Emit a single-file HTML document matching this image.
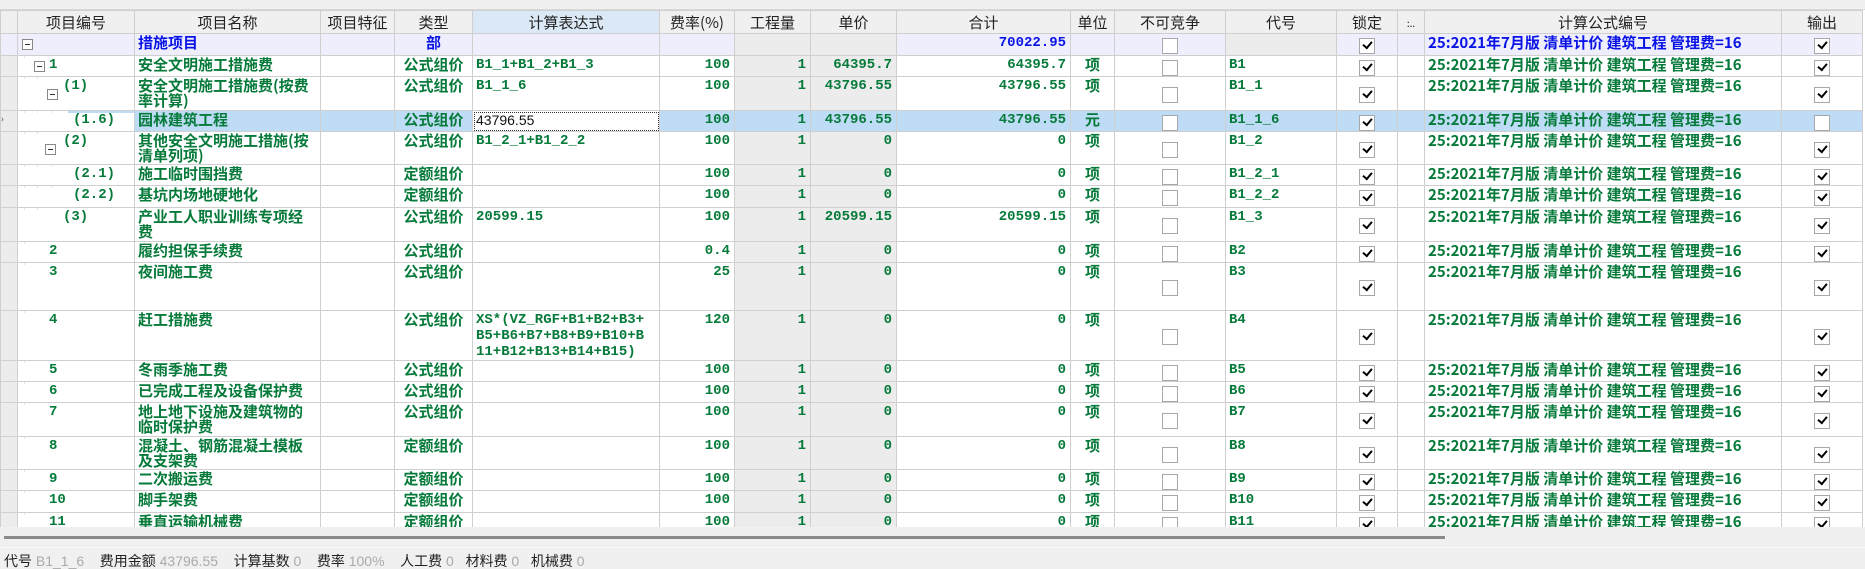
<!DOCTYPE html>
<html><head><meta charset="utf-8"><style>
*{margin:0;padding:0;box-sizing:border-box}
body{width:1865px;height:555px;overflow:hidden;background:#f0f0f0;font-family:"Liberation Sans","Noto Sans CJK SC",sans-serif;position:relative}
#tb{position:absolute;left:0;top:0;width:1865px;height:10px;background:#f0f0f0;border-bottom:1px solid #d8d8d8}
#wrap{position:absolute;left:0;top:10px;width:1865px;height:517px;overflow:hidden;background:#fff}
table{border-collapse:collapse;table-layout:fixed;width:1862px}
td,th{border:1px solid #cfcfcf;overflow:hidden;white-space:nowrap;vertical-align:top;padding:1px 3px 0 3px;font-size:15px;line-height:16px;color:#067a3a;font-weight:bold;font-family:"Noto Sans CJK SC","WenQuanYi Zen Hei",sans-serif}
th{background:#f0f0f0;color:#222;font-weight:normal;text-align:center;vertical-align:middle;font-size:15px}
th.sel{background:#dbe9f6}
td.rh{background:#ececec;border-color:#d0d0d0;padding:0}
td.g{background:#ececec}
.n{font-family:"Liberation Mono",monospace;font-size:14px;text-align:right;padding-right:4px}
.c{text-align:center}
.m{font-family:"Liberation Mono",monospace;font-size:14px;line-height:16px}
.nm{white-space:normal;line-height:15px;word-break:break-all}
tr.blue td{background:#eeeefc;color:#0a14e6}
tr.blue td.g{background:#ececec}
tr.sel td{background:#bedcf5}
tr.sel td.rh{background:#ececec}
tr.sel td.ex{background:#fff;outline:1px dotted #333;outline-offset:-2px;color:#111;font-weight:normal;font-family:"Liberation Sans",sans-serif;font-size:14px}
.cb{display:block;margin:2px auto 0;width:16px;height:16px;border:1px solid #a8a8a8;background:#fff;position:relative}
.ck::after{content:"";position:absolute;left:3px;top:2px;width:7px;height:4px;border-left:2.5px solid #000;border-bottom:2.5px solid #000;transform:rotate(-50deg)}
.mid{vertical-align:middle}
.tree{position:relative;height:100%}
.box{position:absolute;width:11px;height:11px;border:1px solid #888;background:#fff}
.box::after{content:"";position:absolute;left:2px;top:4px;width:5px;height:1px;background:#333}
.tx{position:absolute;top:0;font-family:"Liberation Mono",monospace;font-size:14px}
.hl{position:absolute;top:-1px;bottom:-1px;right:-4px;background:#bedcf5}
.vl{position:absolute;top:-1px;bottom:-1px;width:1px;background:#e4e4e4}
</style></head><body>
<div id="tb"></div>
<div id="wrap">
<table>
<colgroup>
<col style="width:17px"><col style="width:117px"><col style="width:186px"><col style="width:74px"><col style="width:78px"><col style="width:187px"><col style="width:75px"><col style="width:76px"><col style="width:86px"><col style="width:174px"><col style="width:44px"><col style="width:111px"><col style="width:111px"><col style="width:61px"><col style="width:27px"><col style="width:357px"><col style="width:81px">
</colgroup>
<tr style="height:23px"><th></th><th>项目编号</th><th>项目名称</th><th>项目特征</th><th>类型</th><th class="sel">计算表达式</th><th>费率(%)</th><th>工程量</th><th>单价</th><th>合计</th><th>单位</th><th>不可竞争</th><th>代号</th><th>锁定</th><th style="font-size:10px">:..</th><th>计算公式编号</th><th>输出</th></tr>

<tr class="blue" style="height:22px"><td class="rh"></td><td><div class="tree"><span class="box" style="left:1px;top:4px"></span></div></td><td>措施项目</td><td></td><td class="c">部</td><td></td><td></td><td class="g"></td><td class="g"></td><td class="n">70022.95</td><td></td><td class="mid"><span class="cb"></span></td><td class="g"></td><td class="mid"><span class="cb ck"></span></td><td></td><td>25:2021年7月版 清单计价 建筑工程 管理费=16</td><td class="mid"><span class="cb ck"></span></td></tr>

<tr style="height:21px"><td class="rh"></td><td><div class="tree"><span class="vl" style="left:3px"></span><span class="box" style="left:13px;top:4px"></span><span class="tx" style="left:28px">1</span></div></td><td>安全文明施工措施费</td><td></td><td class="c">公式组价</td><td class="m">B1_1+B1_2+B1_3</td><td class="n">100</td><td class="g n">1</td><td class="g n">64395.7</td><td class="n">64395.7</td><td class="c">项</td><td class="mid"><span class="cb"></span></td><td class="m">B1</td><td class="mid"><span class="cb ck"></span></td><td></td><td>25:2021年7月版 清单计价 建筑工程 管理费=16</td><td class="mid"><span class="cb ck"></span></td></tr>

<tr style="height:34px"><td class="rh"></td><td><div class="tree"><span class="vl" style="left:3px"></span><span class="vl" style="left:16px"></span><span class="box" style="left:26px;top:11px"></span><span class="tx" style="left:42px">(1)</span></div></td><td class="nm">安全文明施工措施费(按费率计算)</td><td></td><td class="c">公式组价</td><td class="m">B1_1_6</td><td class="n">100</td><td class="g n">1</td><td class="g n">43796.55</td><td class="n">43796.55</td><td class="c">项</td><td class="mid"><span class="cb"></span></td><td class="m">B1_1</td><td class="mid"><span class="cb ck"></span></td><td></td><td>25:2021年7月版 清单计价 建筑工程 管理费=16</td><td class="mid"><span class="cb ck"></span></td></tr>

<tr class="sel" style="height:21px"><td class="rh" style="font-size:9px;color:#444;font-weight:normal">›</td><td style="background:#fff"><div class="tree"><span class="vl" style="left:3px"></span><span class="vl" style="left:16px"></span><span class="vl" style="left:30px"></span><span class="hl" style="left:47px"></span><span class="tx" style="left:52px">(1.6)</span></div></td><td>园林建筑工程</td><td></td><td class="c">公式组价</td><td class="ex">43796.55</td><td class="n">100</td><td class="n">1</td><td class="n">43796.55</td><td class="n">43796.55</td><td class="c">元</td><td class="mid"><span class="cb"></span></td><td class="m">B1_1_6</td><td class="mid"><span class="cb ck"></span></td><td></td><td>25:2021年7月版 清单计价 建筑工程 管理费=16</td><td class="mid"><span class="cb"></span></td></tr>

<tr style="height:33px"><td class="rh"></td><td><div class="tree"><span class="vl" style="left:3px"></span><span class="vl" style="left:16px"></span><span class="box" style="left:24px;top:11px"></span><span class="tx" style="left:42px">(2)</span></div></td><td class="nm">其他安全文明施工措施(按清单列项)</td><td></td><td class="c">公式组价</td><td class="m">B1_2_1+B1_2_2</td><td class="n">100</td><td class="g n">1</td><td class="g n">0</td><td class="n">0</td><td class="c">项</td><td class="mid"><span class="cb"></span></td><td class="m">B1_2</td><td class="mid"><span class="cb ck"></span></td><td></td><td>25:2021年7月版 清单计价 建筑工程 管理费=16</td><td class="mid"><span class="cb ck"></span></td></tr>

<tr style="height:21px"><td class="rh"></td><td><div class="tree"><span class="vl" style="left:3px"></span><span class="vl" style="left:16px"></span><span class="vl" style="left:30px"></span><span class="tx" style="left:52px">(2.1)</span></div></td><td>施工临时围挡费</td><td></td><td class="c">定额组价</td><td></td><td class="n">100</td><td class="g n">1</td><td class="g n">0</td><td class="n">0</td><td class="c">项</td><td class="mid"><span class="cb"></span></td><td class="m">B1_2_1</td><td class="mid"><span class="cb ck"></span></td><td></td><td>25:2021年7月版 清单计价 建筑工程 管理费=16</td><td class="mid"><span class="cb ck"></span></td></tr>

<tr style="height:22px"><td class="rh"></td><td><div class="tree"><span class="vl" style="left:3px"></span><span class="vl" style="left:16px"></span><span class="vl" style="left:30px"></span><span class="tx" style="left:52px">(2.2)</span></div></td><td>基坑内场地硬地化</td><td></td><td class="c">定额组价</td><td></td><td class="n">100</td><td class="g n">1</td><td class="g n">0</td><td class="n">0</td><td class="c">项</td><td class="mid"><span class="cb"></span></td><td class="m">B1_2_2</td><td class="mid"><span class="cb ck"></span></td><td></td><td>25:2021年7月版 清单计价 建筑工程 管理费=16</td><td class="mid"><span class="cb ck"></span></td></tr>

<tr style="height:34px"><td class="rh"></td><td><div class="tree"><span class="vl" style="left:3px"></span><span class="vl" style="left:16px"></span><span class="tx" style="left:42px">(3)</span></div></td><td class="nm">产业工人职业训练专项经费</td><td></td><td class="c">公式组价</td><td class="m">20599.15</td><td class="n">100</td><td class="g n">1</td><td class="g n">20599.15</td><td class="n">20599.15</td><td class="c">项</td><td class="mid"><span class="cb"></span></td><td class="m">B1_3</td><td class="mid"><span class="cb ck"></span></td><td></td><td>25:2021年7月版 清单计价 建筑工程 管理费=16</td><td class="mid"><span class="cb ck"></span></td></tr>

<tr style="height:21px"><td class="rh"></td><td><div class="tree"><span class="vl" style="left:3px"></span><span class="tx" style="left:28px">2</span></div></td><td>履约担保手续费</td><td></td><td class="c">公式组价</td><td></td><td class="n">0.4</td><td class="g n">1</td><td class="g n">0</td><td class="n">0</td><td class="c">项</td><td class="mid"><span class="cb"></span></td><td class="m">B2</td><td class="mid"><span class="cb ck"></span></td><td></td><td>25:2021年7月版 清单计价 建筑工程 管理费=16</td><td class="mid"><span class="cb ck"></span></td></tr>

<tr style="height:48px"><td class="rh"></td><td><div class="tree"><span class="vl" style="left:3px"></span><span class="tx" style="left:28px">3</span></div></td><td>夜间施工费</td><td></td><td class="c">公式组价</td><td></td><td class="n">25</td><td class="g n">1</td><td class="g n">0</td><td class="n">0</td><td class="c">项</td><td class="mid"><span class="cb"></span></td><td class="m">B3</td><td class="mid"><span class="cb ck"></span></td><td></td><td>25:2021年7月版 清单计价 建筑工程 管理费=16</td><td class="mid"><span class="cb ck"></span></td></tr>

<tr style="height:50px"><td class="rh"></td><td><div class="tree"><span class="vl" style="left:3px"></span><span class="tx" style="left:28px">4</span></div></td><td>赶工措施费</td><td></td><td class="c">公式组价</td><td class="m">XS*(VZ_RGF+B1+B2+B3+<br>B5+B6+B7+B8+B9+B10+B<br>11+B12+B13+B14+B15)</td><td class="n">120</td><td class="g n">1</td><td class="g n">0</td><td class="n">0</td><td class="c">项</td><td class="mid"><span class="cb"></span></td><td class="m">B4</td><td class="mid"><span class="cb ck"></span></td><td></td><td>25:2021年7月版 清单计价 建筑工程 管理费=16</td><td class="mid"><span class="cb ck"></span></td></tr>

<tr style="height:21px"><td class="rh"></td><td><div class="tree"><span class="vl" style="left:3px"></span><span class="tx" style="left:28px">5</span></div></td><td>冬雨季施工费</td><td></td><td class="c">公式组价</td><td></td><td class="n">100</td><td class="g n">1</td><td class="g n">0</td><td class="n">0</td><td class="c">项</td><td class="mid"><span class="cb"></span></td><td class="m">B5</td><td class="mid"><span class="cb ck"></span></td><td></td><td>25:2021年7月版 清单计价 建筑工程 管理费=16</td><td class="mid"><span class="cb ck"></span></td></tr>

<tr style="height:21px"><td class="rh"></td><td><div class="tree"><span class="vl" style="left:3px"></span><span class="tx" style="left:28px">6</span></div></td><td>已完成工程及设备保护费</td><td></td><td class="c">公式组价</td><td></td><td class="n">100</td><td class="g n">1</td><td class="g n">0</td><td class="n">0</td><td class="c">项</td><td class="mid"><span class="cb"></span></td><td class="m">B6</td><td class="mid"><span class="cb ck"></span></td><td></td><td>25:2021年7月版 清单计价 建筑工程 管理费=16</td><td class="mid"><span class="cb ck"></span></td></tr>

<tr style="height:34px"><td class="rh"></td><td><div class="tree"><span class="vl" style="left:3px"></span><span class="tx" style="left:28px">7</span></div></td><td class="nm">地上地下设施及建筑物的临时保护费</td><td></td><td class="c">公式组价</td><td></td><td class="n">100</td><td class="g n">1</td><td class="g n">0</td><td class="n">0</td><td class="c">项</td><td class="mid"><span class="cb"></span></td><td class="m">B7</td><td class="mid"><span class="cb ck"></span></td><td></td><td>25:2021年7月版 清单计价 建筑工程 管理费=16</td><td class="mid"><span class="cb ck"></span></td></tr>

<tr style="height:33px"><td class="rh"></td><td><div class="tree"><span class="vl" style="left:3px"></span><span class="tx" style="left:28px">8</span></div></td><td class="nm">混凝土、钢筋混凝土模板及支架费</td><td></td><td class="c">定额组价</td><td></td><td class="n">100</td><td class="g n">1</td><td class="g n">0</td><td class="n">0</td><td class="c">项</td><td class="mid"><span class="cb"></span></td><td class="m">B8</td><td class="mid"><span class="cb ck"></span></td><td></td><td>25:2021年7月版 清单计价 建筑工程 管理费=16</td><td class="mid"><span class="cb ck"></span></td></tr>

<tr style="height:21px"><td class="rh"></td><td><div class="tree"><span class="vl" style="left:3px"></span><span class="tx" style="left:28px">9</span></div></td><td>二次搬运费</td><td></td><td class="c">定额组价</td><td></td><td class="n">100</td><td class="g n">1</td><td class="g n">0</td><td class="n">0</td><td class="c">项</td><td class="mid"><span class="cb"></span></td><td class="m">B9</td><td class="mid"><span class="cb ck"></span></td><td></td><td>25:2021年7月版 清单计价 建筑工程 管理费=16</td><td class="mid"><span class="cb ck"></span></td></tr>

<tr style="height:22px"><td class="rh"></td><td><div class="tree"><span class="vl" style="left:3px"></span><span class="tx" style="left:28px">10</span></div></td><td>脚手架费</td><td></td><td class="c">定额组价</td><td></td><td class="n">100</td><td class="g n">1</td><td class="g n">0</td><td class="n">0</td><td class="c">项</td><td class="mid"><span class="cb"></span></td><td class="m">B10</td><td class="mid"><span class="cb ck"></span></td><td></td><td>25:2021年7月版 清单计价 建筑工程 管理费=16</td><td class="mid"><span class="cb ck"></span></td></tr>

<tr style="height:22px"><td class="rh"></td><td><div class="tree"><span class="vl" style="left:3px"></span><span class="tx" style="left:28px">11</span></div></td><td>垂直运输机械费</td><td></td><td class="c">定额组价</td><td></td><td class="n">100</td><td class="g n">1</td><td class="g n">0</td><td class="n">0</td><td class="c">项</td><td class="mid"><span class="cb"></span></td><td class="m">B11</td><td class="mid"><span class="cb ck"></span></td><td></td><td>25:2021年7月版 清单计价 建筑工程 管理费=16</td><td class="mid"><span class="cb ck"></span></td></tr>
</table>
</div>
<div style="position:absolute;left:4px;top:536px;width:1441px;height:3px;background:#8a8a8a"></div>
<div style="position:absolute;left:0;top:547px;width:1865px;height:1px;background:#fafafa"></div>
<div style="position:absolute;left:4px;top:553px;font-size:14px;line-height:16px;color:#222;white-space:nowrap;font-family:'Liberation Sans','Noto Sans CJK SC',sans-serif">代号 <span style="color:#aaa">B1_1_6</span>&nbsp;&nbsp;&nbsp;&nbsp;费用金额 <span style="color:#aaa">43796.55</span>&nbsp;&nbsp;&nbsp;&nbsp;计算基数 <span style="color:#aaa">0</span>&nbsp;&nbsp;&nbsp;&nbsp;费率 <span style="color:#aaa">100%</span>&nbsp;&nbsp;&nbsp;&nbsp;人工费 <span style="color:#aaa">0</span>&nbsp;&nbsp;&nbsp;材料费 <span style="color:#aaa">0</span>&nbsp;&nbsp;&nbsp;机械费 <span style="color:#aaa">0</span></div>
</body></html>
